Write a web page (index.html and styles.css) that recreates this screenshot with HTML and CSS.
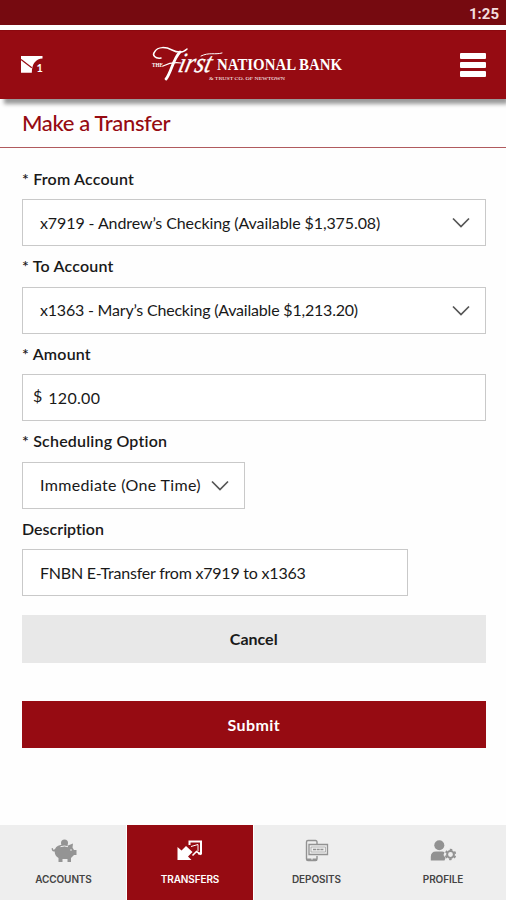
FILE: index.html
```html
<!DOCTYPE html>
<html lang="en">
<head>
<meta charset="utf-8">
<title>Make a Transfer</title>
<link rel="stylesheet" href="styles.css">
</head>
<body>
<div class="status">1:25</div>
<header class="header">
  <svg class="mail" width="24" height="20" viewBox="0 0 24 20">
    <path fill="#fff" d="M0 1h21.500v2.500C15 4 11 8 10.800 17.700H0z"/>
    <path d="M0 4.500l10.800 8.200" fill="none" stroke="#960b12" stroke-width="1.200"/>
    <text x="15.500" y="16.500" class="mail-count">1</text>
  </svg>
  <svg class="logo" width="192" height="40" viewBox="0 0 192 40">
    <g fill="none" stroke="#fff" stroke-linecap="round">
      <path d="M9 13C3 14 0 10 2.500 7C6 1 14 2 20 5C26 8 31 8 35 4" stroke-width="1.500"/>
      <path d="M28 7C21 14 19 28 14 34" stroke-width="2.800"/>
      <path d="M11 21C17 18 23 17 29 18" stroke-width="1.200"/>
      <path d="M49 11C57 7 63 10 70 8" stroke-width="1"/>
    </g>
    <text x="0" y="22" class="logo-the" textLength="11" lengthAdjust="spacingAndGlyphs">THE</text>
    <text x="0" y="0" transform="translate(25 26.500) skewX(-14)" class="logo-script" textLength="33" lengthAdjust="spacingAndGlyphs">irst</text>
    <text x="65" y="25" class="logo-name" textLength="125" lengthAdjust="spacingAndGlyphs">NATIONAL BANK</text>
    <text x="57" y="35" class="logo-sub" textLength="76" lengthAdjust="spacingAndGlyphs">&amp; TRUST CO. OF NEWTOWN</text>
  </svg>
  <div class="menu"><i></i><i></i><i></i></div>
</header>
<h1 class="title"><span>Make a Transfer</span></h1>
<main class="form">
  <div class="field"><label class="l-from">* From Account</label>
    <div class="box"><span class="v-from">x7919 - Andrew’s Checking (Available $1,375.08)</span><svg class="chev" width="18" height="12" viewBox="0 0 18 12"><path d="M1 1.500l8 8 8-8"/></svg></div></div>
  <div class="field"><label class="l-to">* To Account</label>
    <div class="box"><span class="v-to">x1363 - Mary’s Checking (Available $1,213.20)</span><svg class="chev" width="18" height="12" viewBox="0 0 18 12"><path d="M1 1.500l8 8 8-8"/></svg></div></div>
  <div class="field"><label class="l-amount">* Amount</label>
    <div class="box money"><span class="dollar">$</span><span class="v-amount">120.00</span></div></div>
  <div class="field"><label class="l-sched">* Scheduling Option</label>
    <div class="box short"><span class="v-sched">Immediate (One Time)</span><svg class="chev" width="18" height="12" viewBox="0 0 18 12"><path d="M1 1.500l8 8 8-8"/></svg></div></div>
  <div class="field"><label class="l-desc">Description</label>
    <div class="box medium"><span class="v-desc">FNBN E-Transfer from x7919 to x1363</span></div></div>
  <div class="btn cancel">Cancel</div>
  <div class="btn submit">Submit</div>
</main>
<nav class="tabs">
  <div class="tab">
    <svg width="26" height="24" viewBox="0 0 26 24" fill="#949494">
      <circle cx="13.500" cy="4" r="3.500"/>
      <path d="M4 10C6 6 11 5 17 6.500L22 4.500L21.500 8.500L23 11H25.500V16H23L20 19V23H16.500V20H11.500V23H7.500V19C5 17.500 3.500 15 3.700 12.500C1.500 13 .5 11.500 .7 9H1.800C1.800 10.500 2.500 11.500 4 10z"/>
      <path d="M9.500 7.700Q13.500 6.300 17 7.700" fill="none" stroke="#eee"/>
      <circle cx="20" cy="11" r=".8" fill="#eee"/>
    </svg><span class="t1">ACCOUNTS</span></div>
  <div class="tab active">
    <svg width="26" height="24" viewBox="0 0 26 24">
      <path d="M12.500 6V2.500H24V14.500H21" fill="none" stroke="#fff" stroke-width="2"/>
      <path d="M.5 8l4 3.500 4.500-4.500 6.500 6-4.500 4.500 3.500 3.500H.5z" fill="#fff"/>
      <path d="M14 7.500L21 5.500V12" fill="none" stroke="#fff" stroke-width="1"/>
      <path d="M15.500 16.500l4-4 4.500 3" fill="none" stroke="#fff" stroke-width="1.600"/>
    </svg><span class="t2">TRANSFERS</span></div>
  <div class="tab">
    <svg width="26" height="24" viewBox="0 0 26 24" fill="none" stroke="#929292">
      <path d="M13 5V3Q13 1.500 11.500 1.500H4Q2.500 1.500 2.500 3V20Q2.500 21.500 4 21.500H11.500Q13 21.500 13 20V17" stroke-width="1.400"/>
      <path d="M3 19.500H13V22H3z" fill="#929292" stroke="none"/>
      <path d="M5 5.500H23.500V15.500H5z" stroke-width="1.300"/>
      <path d="M7 8H21.500V13H7z" stroke-width=".6"/>
      <path d="M9 10.500H20" stroke-width="1.300" stroke-dasharray="3 .7"/>
      <path d="M7 19.900h2" stroke="#eee"/>
    </svg><span class="t3">DEPOSITS</span></div>
  <div class="tab">
    <svg width="26" height="24" viewBox="0 0 26 24" fill="#929292">
      <circle cx="9.300" cy="6.200" r="5"/>
      <path d="M.8 21.500V18Q.8 12.500 6 12.500H12Q13.500 12.500 14.500 13.200L13.500 16L15.500 19L14.500 21.500z"/>
      <circle cx="20.500" cy="15.500" r="3.400" fill="none" stroke="#929292" stroke-width="2"/>
      <circle cx="20.500" cy="15.500" r="4.900" fill="none" stroke="#929292" stroke-width="1.700" stroke-dasharray="2.400 2.731" transform="rotate(15 20.500 15.500)"/>
    </svg><span class="t4">PROFILE</span></div>
</nav>
</body>
</html>
```
FILE: styles.css
```css
* { box-sizing: border-box; }
body { margin: 0; width: 506px; height: 900px; display: flex; flex-direction: column; overflow: hidden; background: #fefefe; color: #191919; font-family: Lato, "Open Sans", sans-serif; font-variant-ligatures: none; }
.status { height: 25px; flex: none; background: #760a10; color: #f3dede; font: 700 15px/28px Roboto, sans-serif; text-align: right; padding-right: 7px; }
.header { height: 69px; margin-top: 5px; flex: none; background: #960b12; border-top: 1px solid #8b080e; display: flex; align-items: center; justify-content: space-between; padding: 0 20px 0 21px; box-shadow: 3px 6px 4px -1px #999; clip-path: inset(0 0 -14px 0); }
.mail { display: block; }
.mail-count { fill: #fff; font: 700 11px Lato, sans-serif; }
.logo { display: block; margin-left: -9px; overflow: visible; }
.logo text { fill: #fff; font-family: "Liberation Serif", serif; }
.logo .logo-the { font-size: 6px; font-weight: 700; }
.logo .logo-script { font-size: 28px; font-style: italic; stroke: #fff; stroke-width: .3px; }
.logo .logo-name { font-size: 16px; font-weight: 700; }
.logo .logo-sub { font-size: 5px; }
.menu { width: 26px; display: flex; flex-direction: column; gap: 3px; }
.menu i { height: 6px; background: #fff; border-radius: 1px; }
.title { flex: none; height: 49px; margin: 0; border-bottom: 1px solid #b05a5e; padding-left: 22px; font-size: 22px; line-height: 48px; font-weight: 500; color: #960b12; letter-spacing: -.36px; }
.form { flex: 1; padding: 10.5px 20.5px 0 22px; }
.field { height: 87.5px; }
.field label { display: block; height: 40.5px; line-height: 39px; font-size: 16px; font-weight: 600; white-space: nowrap; letter-spacing: .2px; }
.field .l-desc { letter-spacing: 0; }
.box { height: 47px; border: 1px solid #c9c9c9; background: #fff; display: flex; align-items: center; justify-content: space-between; padding: 0 15px 1px 17px; font-size: 16px; white-space: nowrap; }
.v-from { letter-spacing: -.1px; }
.v-to { letter-spacing: -.2px; }
.v-amount { letter-spacing: .3px; }
.v-sched { letter-spacing: .33px; }
.v-desc { letter-spacing: -.22px; }
.chev { fill: none; stroke: #555; stroke-width: 1.700; flex: none; position: relative; top: 1px; }
.short { width: 223px; }
.medium { width: 386px; }
.money { justify-content: flex-start; padding-left: 10px; gap: 6px; }
.dollar { padding-bottom: 4px; }
.btn { height: 47.500px; line-height: 47px; text-align: center; font-size: 16px; font-weight: 700; }
.cancel { margin-top: 19px; background: #e8e8e8; }
.submit { margin-top: 38px; background: #960b12; color: #fff; letter-spacing: .4px; }
.tabs { height: 75px; flex: none; display: grid; grid-template-columns: 127px 126px 127px 126px; background: #eee; }
.tab { display: flex; flex-direction: column; align-items: center; padding-top: 14px; font: 600 10px/14px Inter, sans-serif; letter-spacing: -.1px; color: #444; gap: 9px; }
.tab svg { flex: none; }
.active { background: #960b12; color: #fff; box-shadow: -1px 0 #fff, 1px 0 #fff; }
```
